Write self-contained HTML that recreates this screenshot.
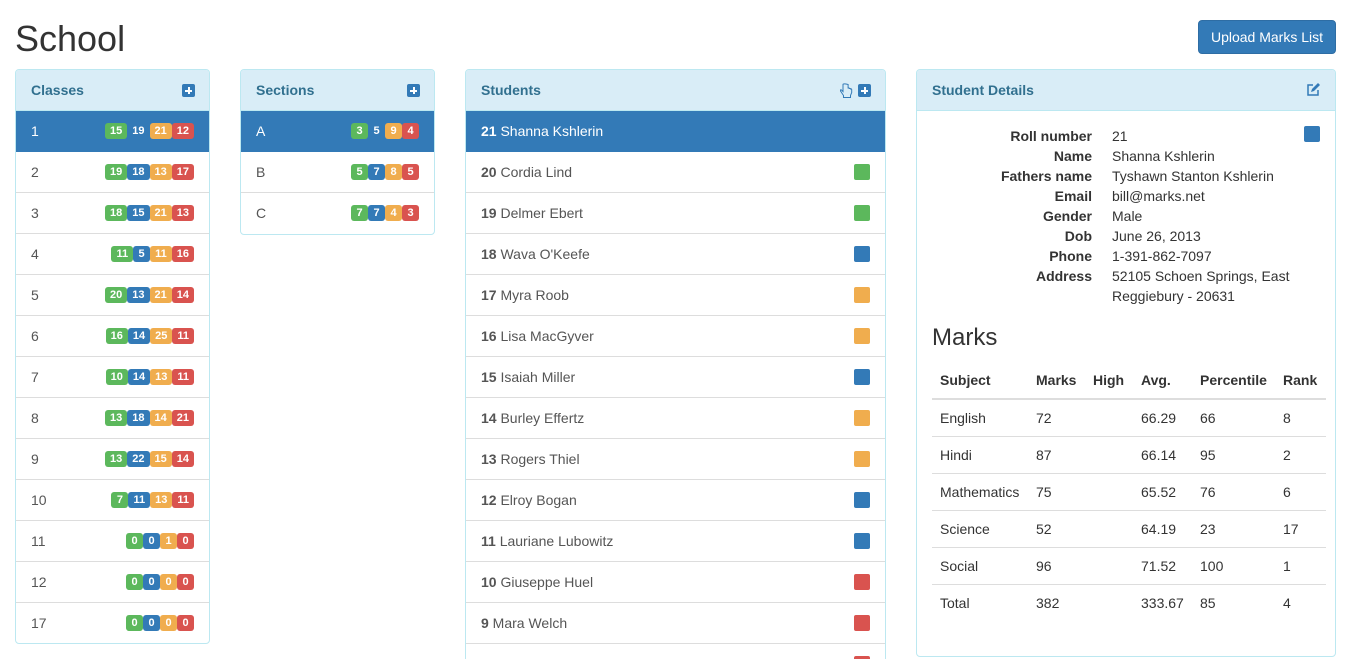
<!DOCTYPE html>
<html><head><meta charset="utf-8"><style>
*{box-sizing:border-box;margin:0;padding:0}
html{width:1351px;height:659px;overflow:hidden}
body{width:1351px;height:659px;overflow:hidden;background:#fff;font-family:"Liberation Sans",sans-serif;font-size:14px;color:#333;position:relative}
h1{position:absolute;left:15px;top:18px;font-size:36px;font-weight:normal;color:#333}
.btn{position:absolute;left:1198px;top:20px;width:138px;height:34px;background:#337ab7;border:1px solid #2e6da4;border-radius:4px;color:#fff;font-size:14px;text-align:center;line-height:32px}
.panel{position:absolute;border:1px solid #bce8f1;border-radius:4px;overflow:hidden;background:#fff}
.ph{height:41px;background:#d9edf7;border-bottom:1px solid #bce8f1;color:#31708f;font-weight:bold;font-size:14px;padding-left:15px;line-height:40px;position:relative}
.row{height:41px;border-bottom:1px solid #ddd;padding-left:15px;line-height:40px;position:relative;color:#555}
.row.act{background:#337ab7;color:#fff;border-color:#337ab7}
.bs{position:absolute;right:15px;top:12px;display:flex}
.b{height:16px;font-size:11px;font-weight:bold;color:#fff;line-height:16px;padding:0 5px;border-radius:3px;min-width:17px;text-align:center}
.g{background:#5cb85c}.bl{background:#337ab7}.o{background:#f0ad4e}.r{background:#d9534f}
.sq{position:absolute;right:15px;top:12px;width:16px;height:16px;border-radius:2px}
.plus{position:absolute;right:14px;top:14px;width:13px;height:13px;background:#337ab7;border-radius:2px}
.plus:before{content:"";position:absolute;left:3px;top:5.5px;width:7px;height:2px;background:#fff}
.plus:after{content:"";position:absolute;left:5.5px;top:3px;width:2px;height:7px;background:#fff}
.dl{position:absolute;left:0;top:56px;width:420px;line-height:20px;font-size:14px}
.dl div{display:flex}
.dl b{width:175px;text-align:right;color:#333}
.dl span{margin-left:20px;width:190px}
table{position:absolute;left:15px;top:292px;width:394px;border-collapse:collapse;font-size:14px}
th{text-align:left;padding:8px;height:37px;border-bottom:2px solid #ddd;color:#333}
td{padding:8px;height:37px;border-bottom:1px solid #ddd;color:#333}
</style></head><body>
<h1>School</h1>
<div class="btn">Upload Marks List</div>

<div class="panel" style="left:15px;top:69px;width:195px;height:575px">
<div class="ph">Classes<span class="plus"></span></div>
<div class="row act">1<div class="bs"><span class="b g">15</span><span class="b bl">19</span><span class="b o">21</span><span class="b r">12</span></div></div>
<div class="row">2<div class="bs"><span class="b g">19</span><span class="b bl">18</span><span class="b o">13</span><span class="b r">17</span></div></div>
<div class="row">3<div class="bs"><span class="b g">18</span><span class="b bl">15</span><span class="b o">21</span><span class="b r">13</span></div></div>
<div class="row">4<div class="bs"><span class="b g">11</span><span class="b bl">5</span><span class="b o">11</span><span class="b r">16</span></div></div>
<div class="row">5<div class="bs"><span class="b g">20</span><span class="b bl">13</span><span class="b o">21</span><span class="b r">14</span></div></div>
<div class="row">6<div class="bs"><span class="b g">16</span><span class="b bl">14</span><span class="b o">25</span><span class="b r">11</span></div></div>
<div class="row">7<div class="bs"><span class="b g">10</span><span class="b bl">14</span><span class="b o">13</span><span class="b r">11</span></div></div>
<div class="row">8<div class="bs"><span class="b g">13</span><span class="b bl">18</span><span class="b o">14</span><span class="b r">21</span></div></div>
<div class="row">9<div class="bs"><span class="b g">13</span><span class="b bl">22</span><span class="b o">15</span><span class="b r">14</span></div></div>
<div class="row">10<div class="bs"><span class="b g">7</span><span class="b bl">11</span><span class="b o">13</span><span class="b r">11</span></div></div>
<div class="row">11<div class="bs"><span class="b g">0</span><span class="b bl">0</span><span class="b o">1</span><span class="b r">0</span></div></div>
<div class="row">12<div class="bs"><span class="b g">0</span><span class="b bl">0</span><span class="b o">0</span><span class="b r">0</span></div></div>
<div class="row" style="border:0">17<div class="bs"><span class="b g">0</span><span class="b bl">0</span><span class="b o">0</span><span class="b r">0</span></div></div>
</div>

<div class="panel" style="left:240px;top:69px;width:195px;height:166px">
<div class="ph">Sections<span class="plus"></span></div>
<div class="row act">A<div class="bs"><span class="b g">3</span><span class="b bl">5</span><span class="b o">9</span><span class="b r">4</span></div></div>
<div class="row">B<div class="bs"><span class="b g">5</span><span class="b bl">7</span><span class="b o">8</span><span class="b r">5</span></div></div>
<div class="row" style="border:0">C<div class="bs"><span class="b g">7</span><span class="b bl">7</span><span class="b o">4</span><span class="b r">3</span></div></div>
</div>

<div class="panel" style="left:465px;top:69px;width:421px;height:600px">
<div class="ph">Students<span class="plus"></span>
<svg style="position:absolute;right:32px;top:13px" width="13" height="15" viewBox="0 0 13 15"><path d="M3 1.5v7l-1.5-1.5c-.8-.6-1.6.3-1 1l3 4.5v2h7v-2l1.2-3v-3c0-.8-1.2-.8-1.2 0v-.5c0-.8-1.2-.8-1.2 0v-.5c0-.8-1.2-.8-1.2 0V1.5C5 .6 3 .6 3 1.5z" fill="none" stroke="#337ab7" stroke-width="1"/></svg></div>
<div class="row act"><b>21</b> Shanna Kshlerin</div>
<div class="row"><b>20</b> Cordia Lind<span class="sq g"></span></div>
<div class="row"><b>19</b> Delmer Ebert<span class="sq g"></span></div>
<div class="row"><b>18</b> Wava O'Keefe<span class="sq bl"></span></div>
<div class="row"><b>17</b> Myra Roob<span class="sq o"></span></div>
<div class="row"><b>16</b> Lisa MacGyver<span class="sq o"></span></div>
<div class="row"><b>15</b> Isaiah Miller<span class="sq bl"></span></div>
<div class="row"><b>14</b> Burley Effertz<span class="sq o"></span></div>
<div class="row"><b>13</b> Rogers Thiel<span class="sq o"></span></div>
<div class="row"><b>12</b> Elroy Bogan<span class="sq bl"></span></div>
<div class="row"><b>11</b> Lauriane Lubowitz<span class="sq bl"></span></div>
<div class="row"><b>10</b> Giuseppe Huel<span class="sq r"></span></div>
<div class="row"><b>9</b> Mara Welch<span class="sq r"></span></div>
<div class="row"><b>8</b> Mallie Beahan<span class="sq r"></span></div>
</div>

<div class="panel" style="left:916px;top:69px;width:420px;height:588px">
<div class="ph">Student Details
<svg style="position:absolute;right:15px;top:13px" width="14" height="14" viewBox="0 0 14 14"><path d="M7 2H2v10h10V7" fill="none" stroke="#337ab7" stroke-width="1.5"/><path d="M5 9l1-3 6-6 2 2-6 6z" fill="#337ab7"/></svg></div>
<span class="sq bl" style="top:56px"></span>
<div class="dl">
<div><b>Roll number</b><span>21</span></div>
<div><b>Name</b><span>Shanna Kshlerin</span></div>
<div><b>Fathers name</b><span>Tyshawn Stanton Kshlerin</span></div>
<div><b>Email</b><span>bill@marks.net</span></div>
<div><b>Gender</b><span>Male</span></div>
<div><b>Dob</b><span>June 26, 2013</span></div>
<div><b>Phone</b><span>1-391-862-7097</span></div>
<div><b>Address</b><span>52105 Schoen Springs, East Reggiebury - 20631</span></div>
</div>
<div style="position:absolute;left:15px;top:254px;font-size:24px">Marks</div>
<table>
<tr><th style="width:96px">Subject</th><th style="width:57px">Marks</th><th style="width:48px">High</th><th style="width:59px">Avg.</th><th style="width:83px">Percentile</th><th>Rank</th></tr>
<tr><td>English</td><td>72</td><td></td><td>66.29</td><td>66</td><td>8</td></tr>
<tr><td>Hindi</td><td>87</td><td></td><td>66.14</td><td>95</td><td>2</td></tr>
<tr><td>Mathematics</td><td>75</td><td></td><td>65.52</td><td>76</td><td>6</td></tr>
<tr><td>Science</td><td>52</td><td></td><td>64.19</td><td>23</td><td>17</td></tr>
<tr><td>Social</td><td>96</td><td></td><td>71.52</td><td>100</td><td>1</td></tr>
<tr><td style="border:0">Total</td><td style="border:0">382</td><td style="border:0"></td><td style="border:0">333.67</td><td style="border:0">85</td><td style="border:0">4</td></tr>
</table>
</div>
</body></html>
